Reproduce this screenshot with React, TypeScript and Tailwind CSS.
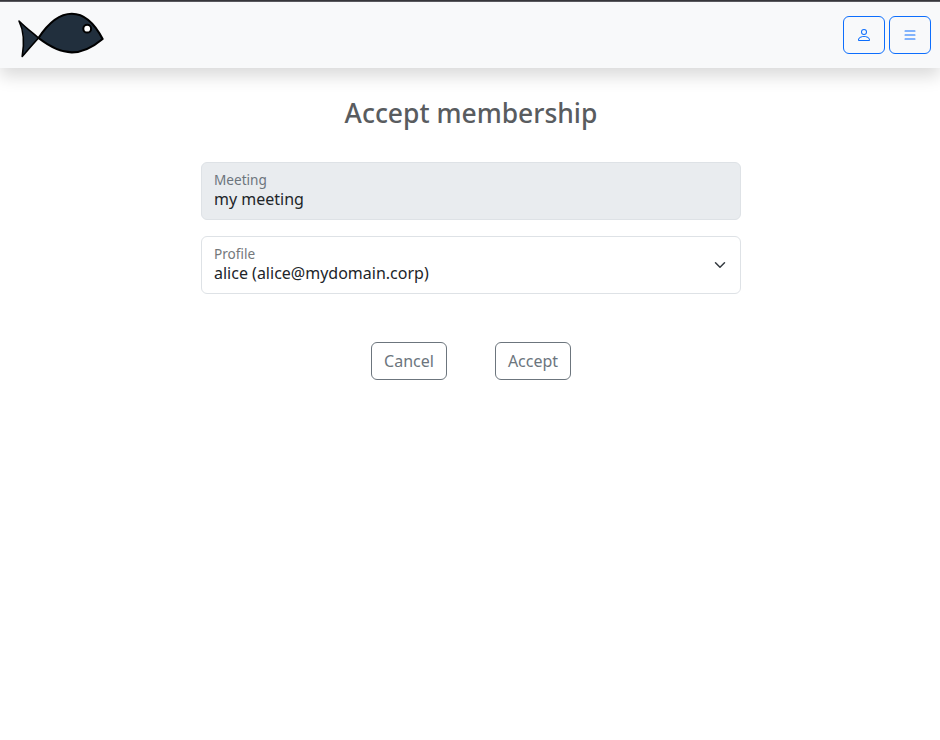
import type { ReactNode } from "react";
import { BsList, BsPerson } from "react-icons/bs";

function FishLogo() {
  return (
    <svg
      width="92"
      height="54"
      viewBox="14 8 92 54"
      fill="#212f3d"
      stroke="#000"
      strokeWidth="2"
      strokeLinejoin="round"
      aria-label="Home"
    >
      <path strokeWidth="1.6" d="M38.5 38 C31.5 32 25 27 19 21 C24.5 32 24.5 43 22.2 56.5 C27 51 33 44 38.5 38Z" />
      <path strokeWidth="2.2" d="M38.5 38 C59.5 6 85 5 102.6 39 C81 57 63 57 38.5 38Z" />
      <circle cx="87.2" cy="28.7" r="3.9" fill="#fff" strokeWidth="2" />
    </svg>
  );
}

function NavButton({ label, children }: { label: string; children: ReactNode }) {
  return (
    <button
      type="button"
      aria-label={label}
      className="flex h-[38px] w-[42px] items-center justify-center rounded-md border border-[#0d6efd] text-[#0d6efd]"
    >
      {children}
    </button>
  );
}

function ActionButton({ children }: { children: ReactNode }) {
  return (
    <button
      type="button"
      className="h-[38px] w-[76px] rounded-md border border-[#6c757d] text-base text-[#6c757d]"
    >
      {children}
    </button>
  );
}

export default function App() {
  return (
    <div className="min-h-screen bg-white font-['Noto_Sans',sans-serif] text-[#212529]">
      <div className="h-px bg-[#38383d]" />
      <header className="flex h-[67px] items-center justify-between border-t border-[#59595e] bg-[#f8f9fa] pr-[9px] pl-[14px] shadow-[0_8px_16px_rgba(0,0,0,0.15)]">
        <FishLogo />
        <div className="flex gap-1">
          <NavButton label="Profile">
            <BsPerson size={16} />
          </NavButton>
          <NavButton label="Menu">
            <BsList size={16} />
          </NavButton>
        </div>
      </header>

      <main className="ml-[201px] flex w-[540px] flex-col items-center pt-7">
        <h1 className="text-[26.44px] leading-[34px] font-medium text-[#595c5f]">Accept membership</h1>

        <div className="mt-8 flex h-[58px] w-full flex-col rounded-md border border-[#dee2e6] bg-[#e9ecef] px-3 pt-[7px]">
          <span className="text-[13.6px] leading-5 text-[#6c757d]">Meeting</span>
          <span className="-mt-[3px] text-base leading-6">my meeting</span>
        </div>

        <div className="mt-4 flex h-[58px] w-full items-center justify-between rounded-md border border-[#dee2e6] bg-white px-3">
          <div className="flex h-full flex-col pt-[7px]">
            <span className="text-[13.6px] leading-5 text-[#75787b]">Profile</span>
            <span className="-mt-[3px] text-base leading-6">alice (alice@mydomain.corp)</span>
          </div>
          <svg width="16" height="12" viewBox="0 0 16 16" preserveAspectRatio="xMidYMid meet" fill="none" stroke="#343a40" strokeWidth="2" strokeLinecap="round" strokeLinejoin="round">
            <path d="m2 5 6 6 6-6" />
          </svg>
        </div>

        <div className="mt-12 flex gap-12">
          <ActionButton>Cancel</ActionButton>
          <ActionButton>Accept</ActionButton>
        </div>
      </main>
    </div>
  );
}
